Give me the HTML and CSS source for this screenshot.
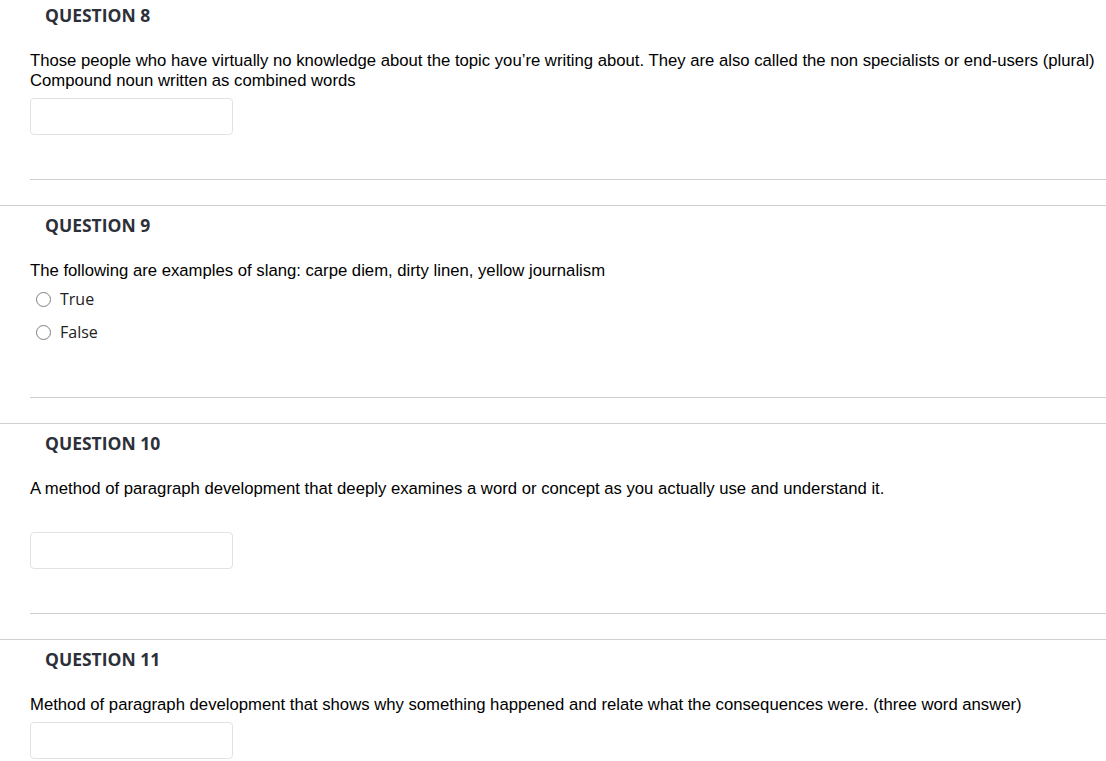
FILE: index.html
```html
<!DOCTYPE html>
<html lang="en">
<head>
<meta charset="utf-8">
<title>Quiz</title>
<link rel="stylesheet" href="styles.css">
</head>
<body>
<div class="quiz">
  <section class="question first">
    <h2 class="q-title">QUESTION 8</h2>
    <div class="q-body">
      <p class="q-text">Those people who have virtually no knowledge about the topic you’re writing about. They are also called the non specialists or end-users (plural)<br>Compound noun written as combined words</p>
      <input class="answer" type="text" aria-label="Answer">
    </div>
    <div class="q-end"></div>
  </section>

  <section class="question">
    <h2 class="q-title">QUESTION 9</h2>
    <div class="q-body">
      <p class="q-text">The following are examples of slang: carpe diem, dirty linen, yellow journalism</p>
      <div class="choices">
        <label class="choice"><span class="radio"></span><span class="choice-label">True</span></label>
        <label class="choice"><span class="radio"></span><span class="choice-label">False</span></label>
      </div>
    </div>
    <div class="q-end tall"></div>
  </section>

  <section class="question">
    <h2 class="q-title">QUESTION 10</h2>
    <div class="q-body">
      <p class="q-text spaced">A method of paragraph development that deeply examines a word or concept as you actually use and understand it.</p>
      <input class="answer" type="text" aria-label="Answer">
    </div>
    <div class="q-end"></div>
  </section>

  <section class="question">
    <h2 class="q-title">QUESTION 11</h2>
    <div class="q-body">
      <p class="q-text">Method of paragraph development that shows why something happened and relate what the consequences were. (three word answer)</p>
      <input class="answer" type="text" aria-label="Answer">
    </div>
    <div class="q-end"></div>
  </section>
</div>
</body>
</html>
```

FILE: styles.css
```css
* { box-sizing: border-box; }
html, body { margin: 0; padding: 0; background: #fff; }
body { overflow: hidden; }

.quiz { display: flex; flex-direction: column; }

.question {
  border-top: 1px solid #cfcfcf;
  padding-top: 7px;
}
.question.first {
  border-top: none;
  padding-top: 3px;
}

.q-title {
  margin: 0 0 0 45px;
  font-family: "Open Sans", sans-serif;
  font-weight: 700;
  font-size: 17.5px;
  line-height: 24px;
  color: #2d3039;
}

.q-body {
  margin-left: 30px;
  padding-top: 24px;
  display: flex;
  flex-direction: column;
  align-items: flex-start;
}

.q-text {
  margin: 0;
  font-family: "Liberation Sans", Arial, sans-serif;
  font-size: 16.7px;
  line-height: 20px;
  color: #000;
}
.q-text.spaced { margin-bottom: 26px; }

.answer {
  margin-top: 7px;
  width: 203px;
  height: 37px;
  border: 1px solid #e2e2e2;
  border-radius: 4px;
  background: #fff;
  outline: none;
}

.choices {
  margin-top: 6px;
  display: flex;
  flex-direction: column;
  gap: 9px;
}
.choice {
  display: flex;
  align-items: center;
  height: 24px;
  padding-left: 6px;
}
.radio {
  width: 15px;
  height: 15px;
  border: 1px solid #808080;
  border-radius: 50%;
  flex: none;
}
.choice-label {
  margin-left: 9px;
  font-family: "Open Sans", sans-serif;
  font-size: 16px;
  color: #222;
}

.q-end {
  margin-left: 30px;
  margin-bottom: 25px;
  height: 45px;
  border-bottom: 1px solid #cfcfcf;
}
.q-end.tall { height: 54px; }
```
